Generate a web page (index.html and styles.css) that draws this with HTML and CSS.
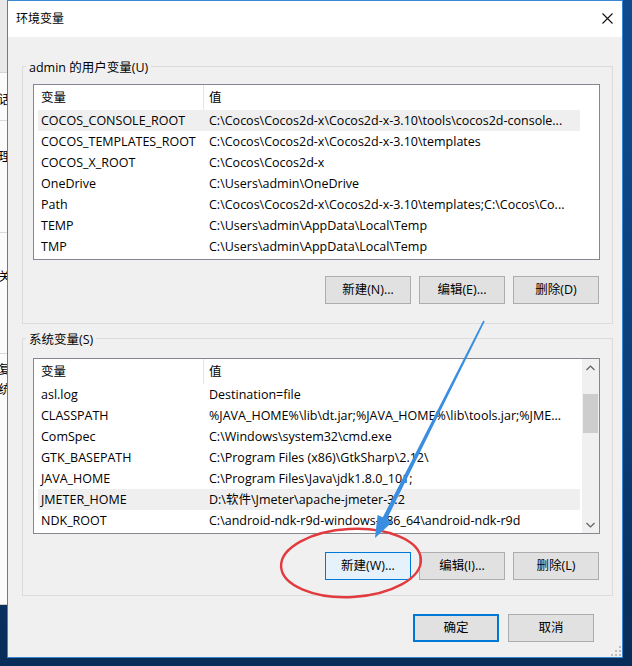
FILE: index.html
```html
<!DOCTYPE html>
<html lang="zh-CN">
<head>
<meta charset="utf-8">
<title>环境变量</title>
<link rel="stylesheet" href="styles.css">
</head>
<body>
<div class="desktop">
  <div class="bgwin">
    <div class="bg-top"></div>
    <div class="bg-char m1">话</div>
    <div class="bg-sep s1"></div>
    <div class="bg-char m2">理</div>
    <div class="bg-sep s2"></div>
    <div class="bg-char m3">关</div>
    <div class="bg-sep s3"></div>
    <div class="bg-char m4">复</div>
    <div class="bg-char m5">统</div>
  </div>

  <div class="dialog">
    <div class="titlebar">
      <span class="title">环境变量</span>
      <svg class="close" width="11" height="11" viewBox="0 0 11 11"><path d="M0.5 0.5L10.5 10.5M10.5 0.5L0.5 10.5" stroke="#111" stroke-width="1.1" fill="none"/></svg>
    </div>
    <div class="body">
      <div class="group group-user">
        <div class="group-label">admin 的用户变量(U)</div>
        <div class="list list-user">
          <div class="list-main">
            <div class="list-header"><div class="c1">变量</div><div class="c2">值</div></div>
            <div class="row hl"><div class="c1">COCOS_CONSOLE_ROOT</div><div class="c2">C:\Cocos\Cocos2d-x\Cocos2d-x-3.10\tools\cocos2d-console...</div></div>
            <div class="row"><div class="c1">COCOS_TEMPLATES_ROOT</div><div class="c2">C:\Cocos\Cocos2d-x\Cocos2d-x-3.10\templates</div></div>
            <div class="row"><div class="c1">COCOS_X_ROOT</div><div class="c2">C:\Cocos\Cocos2d-x</div></div>
            <div class="row"><div class="c1">OneDrive</div><div class="c2">C:\Users\admin\OneDrive</div></div>
            <div class="row"><div class="c1">Path</div><div class="c2">C:\Cocos\Cocos2d-x\Cocos2d-x-3.10\templates;C:\Cocos\Co...</div></div>
            <div class="row"><div class="c1">TEMP</div><div class="c2">C:\Users\admin\AppData\Local\Temp</div></div>
            <div class="row"><div class="c1">TMP</div><div class="c2">C:\Users\admin\AppData\Local\Temp</div></div>
          </div>
        </div>
        <div class="btns btns-user">
          <button class="btn">新建(N)...</button>
          <button class="btn">编辑(E)...</button>
          <button class="btn">删除(D)</button>
        </div>
      </div>

      <div class="group group-sys">
        <div class="group-label">系统变量(S)</div>
        <div class="list list-sys">
          <div class="list-main">
            <div class="list-header"><div class="c1">变量</div><div class="c2">值</div></div>
            <div class="row"><div class="c1">asl.log</div><div class="c2">Destination=file</div></div>
            <div class="row"><div class="c1">CLASSPATH</div><div class="c2">%JAVA_HOME%\lib\dt.jar;%JAVA_HOME%\lib\tools.jar;%JME...</div></div>
            <div class="row"><div class="c1">ComSpec</div><div class="c2">C:\Windows\system32\cmd.exe</div></div>
            <div class="row"><div class="c1">GTK_BASEPATH</div><div class="c2">C:\Program Files (x86)\GtkSharp\2.12\</div></div>
            <div class="row"><div class="c1">JAVA_HOME</div><div class="c2">C:\Program Files\Java\jdk1.8.0_101;</div></div>
            <div class="row hl"><div class="c1">JMETER_HOME</div><div class="c2">D:\软件\Jmeter\apache-jmeter-3.2</div></div>
            <div class="row"><div class="c1">NDK_ROOT</div><div class="c2">C:\android-ndk-r9d-windows-x86_64\android-ndk-r9d</div></div>
          </div>
          <div class="scrollbar">
            <div class="sb-btn"><svg width="9" height="6" viewBox="0 0 9 6"><path d="M0.5 5L4.5 1L8.5 5" stroke="#606060" stroke-width="1.2" fill="none"/></svg></div>
            <div class="sb-track"><div class="sb-thumb"></div></div>
            <div class="sb-btn"><svg width="9" height="6" viewBox="0 0 9 6"><path d="M0.5 1L4.5 5L8.5 1" stroke="#606060" stroke-width="1.2" fill="none"/></svg></div>
          </div>
        </div>
        <div class="btns btns-sys">
          <button class="btn btn-hot">新建(W)...</button>
          <button class="btn">编辑(I)...</button>
          <button class="btn">删除(L)</button>
        </div>
      </div>

      <div class="dlg-btns">
        <button class="btn btn-default">确定</button>
        <button class="btn">取消</button>
      </div>
    </div>
    <svg class="grip" width="10" height="10" viewBox="0 0 10 10">
      <rect x="8" y="0" width="2" height="2" fill="#bdbdbd"/>
      <rect x="4" y="4" width="2" height="2" fill="#bdbdbd"/>
      <rect x="8" y="4" width="2" height="2" fill="#bdbdbd"/>
      <rect x="0" y="8" width="2" height="2" fill="#bdbdbd"/>
      <rect x="4" y="8" width="2" height="2" fill="#bdbdbd"/>
      <rect x="8" y="8" width="2" height="2" fill="#bdbdbd"/>
    </svg>
  </div>

  <svg class="annot" width="632" height="666" viewBox="0 0 632 666">
    <ellipse cx="351" cy="563" rx="70" ry="34" transform="rotate(-3 351 563)" fill="none" stroke="#e23b3f" stroke-width="2.4"/>
    <polygon points="483.3,320.6 484.7,321.4 386.8,519.3 392,522.2 375,538 377.6,515 382.8,517.3" fill="#3a8ee2"/>
  </svg>
</div>
</body>
</html>
```
FILE: styles.css
```css
* { box-sizing: border-box; margin: 0; padding: 0; }
html, body { width: 632px; height: 666px; overflow: hidden; }
body {
  background: #0a3a72;
  font-family: "Open Sans", "Noto Sans CJK SC", sans-serif;
  font-size: 12.5px;
  color: #000;
}
.desktop {
  position: relative;
  width: 632px;
  height: 666px;
  overflow: hidden;
  background: linear-gradient(180deg, #0e4c8f 0%, #0b3f7a 60%, #082c57 100%);
}

/* window behind */
.bgwin {
  position: absolute;
  left: -293px;
  top: 0;
  width: 300px;
  height: 605px;
  background: #fbfbfb;
  border-bottom: 1px solid #cfcfcf;
}
.bg-top { height: 73px; background: #e9e9e9; border-bottom: 1px solid #d4d4d4; }
.bg-char { height: 16px; line-height: 16px; text-align: right; padding-right: 1px; margin-right: -5px; }
.bg-sep { height: 1px; background: #dadada; }
.m1 { margin-top: 19px; }
.s1 { margin-top: 12px; }
.m2 { margin-top: 28px; }
.s2 { margin-top: 67px; }
.m3 { margin-top: 36px; }
.s3 { margin-top: 68px; }
.m4 { margin-top: 8px; }
.m5 { margin-top: 4px; }

/* dialog */
.dialog {
  position: absolute;
  left: 7px;
  top: 0;
  width: 616px;
  height: 658px;
  border: 1px solid #3a86d1;
  background: #f0f0f0;
  display: flex;
  flex-direction: column;
}
.titlebar {
  height: 36px;
  flex: none;
  background: #fff;
  display: flex;
  align-items: center;
  justify-content: space-between;
  padding: 0 9px 1px 8px;
}
.title { font-size: 12px; line-height: 16px; }
.close { display: block; }

.body {
  padding: 29px 9px 0 14px;
  display: flex;
  flex-direction: column;
}
.group {
  border: 1px solid #dcdcdc;
  padding: 0 12px 0 10px;
}
.group-user { padding-bottom: 19px; }
.group-sys { margin-top: 14px; padding-bottom: 15px; }
.group-label {
  width: fit-content;
  margin: -7px 0 0 -7px;
  padding: 0 3px;
  line-height: 16px;
  background: #f0f0f0;
}
.list {
  height: 176px;
  border: 1px solid #828790;
  background: #fff;
  display: flex;
}
.list-user { margin-top: 8px; }
.list-sys { margin-top: 10px; }
.list-main { width: 546px; flex: none; }
.list-header { display: flex; height: 25px; line-height: 25px; }
.list-header .c1 { width: 170px; padding-left: 7px; border-right: 1px solid #e5e5e5; }
.list-header .c2 { padding-left: 5px; }
.row {
  display: flex;
  height: 21px;
  line-height: 21px;
  margin-left: 4px;
  white-space: nowrap;
}
.row.hl { background: #efefef; }
.row .c1 { width: 165px; padding-left: 3px; overflow: hidden; }
.row .c2 { width: 377px; padding-left: 6px; overflow: hidden; }

.scrollbar {
  margin-left: auto;
  width: 17px;
  background: #f0f0f0;
  display: flex;
  flex-direction: column;
}
.sb-btn { height: 17px; display: flex; align-items: center; justify-content: center; }
.sb-btn svg { display: block; }
.sb-track { flex: 1; padding: 18px 1px 0; }
.sb-thumb { height: 39px; background: #cdcdcd; }

.btns {
  display: flex;
  justify-content: flex-end;
  gap: 8px;
  margin-right: 1px;
}
.btns-user { margin-top: 16px; }
.btns-sys { margin-top: 18px; }
.btn {
  width: 86px;
  height: 28px;
  border: 1px solid #adadad;
  background: #e1e1e1;
  font: inherit;
  color: #000;
  line-height: 16px;
}
.btn-hot { background: #e5f1fb; border-color: #0078d7; }
.btn-default { border: 2px solid #0078d7; }
.dlg-btns {
  display: flex;
  justify-content: flex-end;
  gap: 9px;
  margin: 18px 19px 0 0;
}
.grip { position: absolute; right: 1px; bottom: 1px; }

.annot { position: absolute; left: 0; top: 0; pointer-events: none; }
```
